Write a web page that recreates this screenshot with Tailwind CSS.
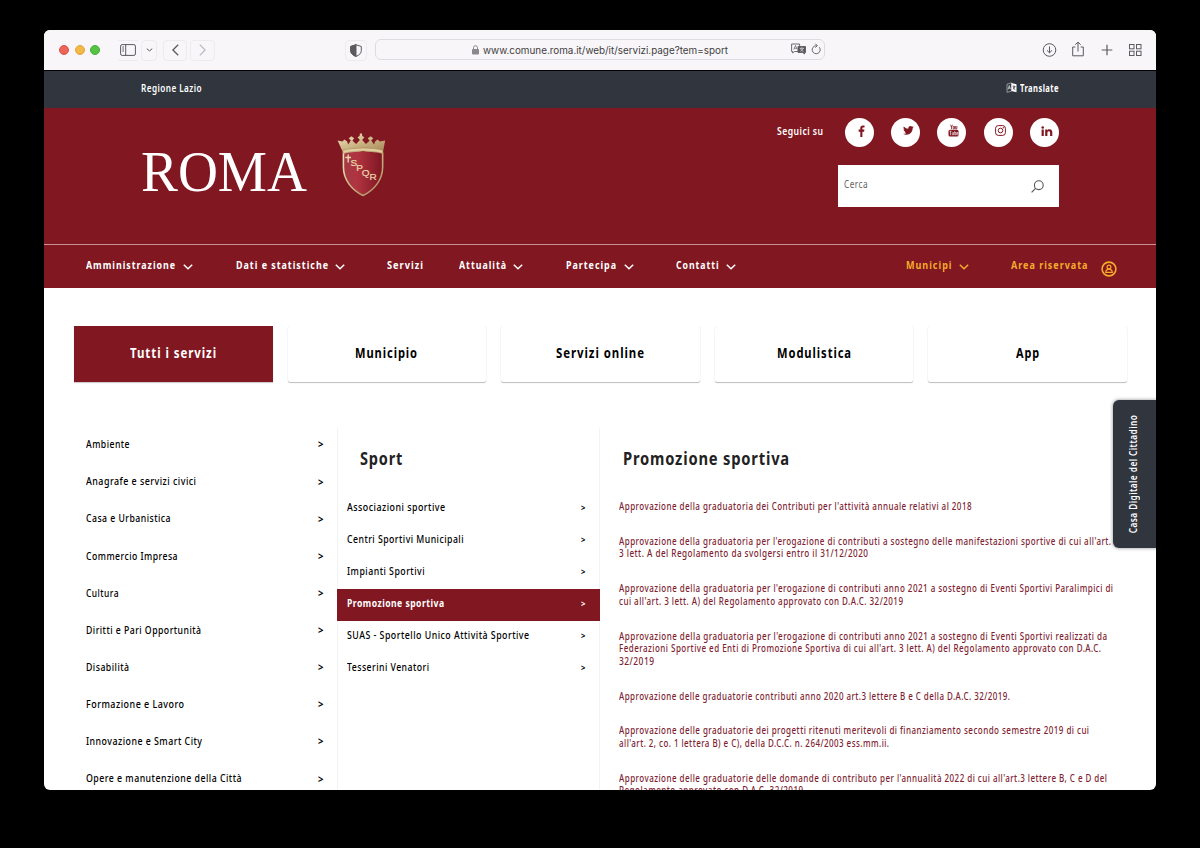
<!DOCTYPE html>
<html lang="it">
<head>
<meta charset="utf-8">
<title>Roma Capitale - Servizi</title>
<script src="https://cdn.jsdelivr.net/npm/@tailwindcss/browser@4"></script>
</head>
<body class="bg-black w-[1200px] h-[848px] overflow-hidden pt-[30px] pl-[44px] font-['Noto_Sans','Open_Sans',sans-serif] text-[11px] text-black tracking-[.6px]">
<div class="relative w-[1112px] h-[760px] rounded-[6px] bg-white overflow-hidden flex flex-col">

  <!-- browser toolbar -->
  <div class="h-[41px] shrink-0 bg-[#f8f6f9] border-b border-black flex items-center pl-[15px] pr-[14px] text-[#5c5a5e]">
    <div class="flex gap-[5.5px] w-[59px]">
      <span class="size-[10px] rounded-full bg-[#ec6559] border border-[#d9564b]"></span>
      <span class="size-[10px] rounded-full bg-[#f3b846] border border-[#e0a53c]"></span>
      <span class="size-[10px] rounded-full bg-[#55c443] border border-[#46ae38]"></span>
    </div>
    <div class="w-[20px] h-[21px] border-y border-[#edebee] flex items-center justify-center"><svg class="w-[16px] h-[12px]" viewBox="0 0 16 12" fill="none" stroke="currentColor"><rect x=".6" y=".6" width="14.8" height="10.8" rx="1.5"/><path d="M5.7.6v10.8M2.3 3h1.7M2.3 5h1.7M2.3 7h1.7"/></svg></div>
    <div class="ml-[3px] w-[16px] h-[21px] rounded border border-[#edebee] flex items-center justify-center"><svg class="w-[7px] h-[4px]" viewBox="0 0 7 4" fill="none" stroke="currentColor"><path d="M.8.7 3.5 2.9 6.2.7"/></svg></div>
    <div class="ml-[6px] w-[24px] h-[21px] rounded border border-[#edebee] flex items-center justify-center"><svg class="w-[7px] h-[12px]" viewBox="0 0 7 12" fill="none" stroke="currentColor" stroke-width="1.3"><path d="M6.2.7.9 6l5.3 5.3"/></svg></div>
    <div class="ml-[3px] w-[25px] h-[21px] rounded border border-[#edebee] flex items-center justify-center text-[#b9b7bb]"><svg class="w-[7px] h-[12px]" viewBox="0 0 7 12" fill="none" stroke="currentColor" stroke-width="1.2"><path d="M.8.7 6.1 6 .8 11.3"/></svg></div>
    <div class="ml-[130px] w-[22px] h-[21px] rounded border border-[#edebee] flex items-center justify-center"><svg class="w-[12px] h-[13px]" viewBox="0 0 12 13" fill="none" stroke="currentColor"><path d="M6 .7 11.3 2.5v4C11.300 9.500 9 11.300 6 12.400 3 11.300.7 9.500.7 6.500v-4Z"/><path d="M6 .7v11.700C3 11.300.7 9.500.7 6.500v-4Z" fill="currentColor"/></svg></div>
    <div class="ml-[8px] w-[450px] h-[21px] rounded-[6px] border border-[#dedce0] flex items-center pl-[96px] pr-[3px] relative -top-px">
      <svg class="w-[7px] h-[10px] text-[#8a888c] mt-px" viewBox="0 0 7 10"><rect y="4" width="7" height="5.500" rx="1" fill="currentColor"/><path d="M1.500 4.500V2.700a2 2 0 0 1 4 0v1.800" fill="none" stroke="currentColor"/></svg>
      <span class="ml-[4px] mt-[2px] tracking-normal font-['Inter','Liberation_Sans',sans-serif] text-[10px] text-[#3f3e41]" data-w="245">www.comune.roma.it/web/it/servizi.page?tem=sport</span>
      <svg class="ml-auto w-[15px] h-[12px]" viewBox="0 0 15 12" fill="none" stroke="currentColor" stroke-width=".9"><path d="M7 8.500H3.500L1.700 10V8.500H.6V1h8v2"/><path d="M2.800 6.500 4.500 2.500l1.700 4M3.400 5.300h2.200" stroke-width=".7"/><path d="M7 3.500h7.500v6h-1V11l-1.700-1.500H7Z" fill="currentColor"/><path d="M8.800 5.300h4M10.800 4.500v.8M9.300 8.300c1.500-.6 2.500-1.600 2.800-3M9.600 5.500c.4 1.300 1.400 2.300 2.800 2.800" stroke="#f8f6f9" stroke-width=".6"/></svg>
      <svg class="ml-[5px] w-[10px] h-[12px]" viewBox="0 0 10 12" fill="none" stroke="currentColor" stroke-width=".9"><path d="M8.300 4.200A4 4 0 1 1 5 2.700h.8M4.300.7l2 2-2 2"/></svg>
    </div>
    <div class="ml-auto flex items-center gap-[14.500px]">
      <svg class="w-[15px] h-[14px]" viewBox="0 0 15 14" fill="none" stroke="currentColor"><circle cx="7.500" cy="7" r="6.300"/><path d="M7.500 3.500v6.200M5 7.400l2.500 2.400L10 7.400"/></svg>
      <svg class="w-[14px] h-[16px] -mt-[2px]" viewBox="0 0 14 16" fill="none" stroke="currentColor"><path d="M4.300 6H1.700v8.800h10.600V6H9.700M7 10.500V1.200M4.300 3.700 7 1.100l2.700 2.600"/></svg>
      <svg class="w-[14px] h-[14px]" viewBox="0 0 14 14" fill="none" stroke="currentColor" stroke-width="1.200"><path d="M7 1.700v10.600M1.700 7h10.600"/></svg>
      <svg class="w-[14px] h-[14px]" viewBox="0 0 14 14" fill="none" stroke="currentColor"><rect x="1.500" y="1.500" width="4.500" height="4.300"/><rect x="8.500" y="1.500" width="4.500" height="4.300"/><rect x="1.500" y="8.200" width="4.500" height="4.300"/><rect x="8.500" y="8.200" width="4.500" height="4.300"/></svg>
    </div>
  </div>

  <!-- top bar -->
  <div class="h-[37px] shrink-0 bg-[#31363e] flex justify-between items-start pl-[97px] pr-[97px] text-white font-semibold text-[10.500px]">
    <span class="leading-[16px] mt-[9px]" data-w="61">Regione Lazio</span>
    <div class="flex items-center mt-[9px] leading-[16px]">
      <svg class="w-[11px] h-[11px] mr-[3px] -mt-px" viewBox="0 0 11 11"><path d="M1 2.200 5.500.8v8.400L1 10.300Z" fill="none" stroke="#b9bcc0" stroke-width=".7"/><path d="M2 7.500 3.300 3.500l1.200 3.700M2.400 6.300l1.700-.4" fill="none" stroke="#fff" stroke-width=".6"/><path d="M5.500 1l5 1.300v8L5.500 9Z" fill="#fff"/><path d="M6.500 4.200l3 .5M8 3.500v1M9 4.700C8.700 6 7.900 6.900 6.800 7.300M7.200 5c.3 1.200 1 2.100 2.200 2.900" fill="none" stroke="#31363e" stroke-width=".7"/></svg>
      <span data-w="39" class="font-bold">Translate</span>
    </div>
  </div>

  <!-- header -->
  <div class="h-[137px] shrink-0 bg-[#801721] border-b border-[#c79193] flex text-white">
    <div class="ml-[97px] mt-[26px] h-[76px] flex items-start">
      <span class="font-['Liberation_Serif',serif] tracking-normal text-[57px] leading-[76px] block" data-w="166">ROMA</span>
      <svg class="ml-[29px] -mt-[1px] w-[53px] h-[64px]" viewBox="0 0 50 64" preserveAspectRatio="none">
        <defs>
          <linearGradient id="g" x1="0" x2="1" y1="0" y2="1"><stop offset="0" stop-color="#f3e6c0"/><stop offset=".5" stop-color="#cdb585"/><stop offset="1" stop-color="#a8895a"/></linearGradient>
          <linearGradient id="s" x1="0" x2="1"><stop offset="0" stop-color="#a23a45"/><stop offset=".35" stop-color="#b03440"/><stop offset="1" stop-color="#7e1522"/></linearGradient>
        </defs>
        <path d="M7 20C14 17.500 20 19 25.500 17 31 19 37 17.500 44 20V34C44 47 36 57 25.500 62.500 15 57 7 47 7 34Z" fill="url(#s)" stroke="url(#g)" stroke-width="1.500"/>
        <path d="M6 18 1.500 7.500l4.500 1 2-2 2.500 2 1 3 2.500-4-2-2.200 2.500-2 2.700 2-1.700 2.500 3.500 3.200 3.500-4-2.200-2.800 2-1.200.2-2.400h2l.3 2.400 2 1.200L24.700 7l3.500 4 3.500-3.200L30 5.300l2.700-2 2.500 2-2 2.200 2.700 4 1-3 2.300-2 2.200 2 5-1L44.500 18C37 15.500 14 15.500 6 18Z" fill="url(#g)"/>
        <path d="M6 17.500C16 14.300 35 14.300 44.500 17.500l-.6 2.800C34 17.300 17 17.300 6.700 20.300Z" fill="#e2d0a0" stroke="#8d6b3f" stroke-width=".4"/>
        <path d="M11.500 21.500v8M8.800 24.500h5.400" stroke="#ead8ae" stroke-width="1.300"/>
        <g fill="#ead8ae" stroke="#ead8ae" stroke-width=".2" font-family="Liberation Sans" font-size="9.500" letter-spacing="0" text-anchor="middle"><text x="16.800" y="33.500">S</text><text x="22.300" y="38">P</text><text x="28" y="43">Q</text><text x="35" y="47.500">R</text></g>
      </svg>
    </div>
    <div class="ml-auto mr-[97px] flex flex-col items-end">
      <div class="mt-[10px] flex items-center text-[#801721]">
        <span class="text-white font-semibold text-[11px] -mt-[3px]" data-w="46.500">Seguici su</span>
        <div class="flex gap-[17.300px] ml-[21.500px]">
          <span class="size-[29px] rounded-full bg-white flex items-center justify-center"><svg class="w-[8px] h-[12px] ml-[5px] -mt-[4px]" viewBox="0 0 8 12" fill="currentColor"><path d="M2.300 12V6.700H.6V4.500h1.700V3C2.300 1.200 3.300.4 4.900.4c.8 0 1.400.1 1.600.1v2H5.400c-.9 0-1 .4-1 1v1h2l-.3 2.200H4.400V12Z"/></svg></span>
          <span class="size-[29px] rounded-full bg-white flex items-center justify-center"><svg class="w-[11px] h-[9px] ml-[5px] -mt-[4px]" viewBox="0 0 24 20" fill="currentColor"><path d="M23.600 2.500a9 9 0 0 1-2.700.8 4.800 4.800 0 0 0 2.100-2.700 9 9 0 0 1-3 1.200 4.850 4.850 0 0 0-8.300 4.400A13.700 13.700 0 0 1 1.700 1.100a4.850 4.850 0 0 0 1.500 6.500 5 5 0 0 1-2.200-.6c0 2.300 1.600 4.300 3.900 4.800a5 5 0 0 1-2.200.1 4.850 4.850 0 0 0 4.500 3.400A9.700 9.700 0 0 1 0 17.300a13.700 13.700 0 0 0 7.400 2.200c9 0 14-7.600 13.700-14.400a10 10 0 0 0 2.500-2.600Z"/></svg></span>
          <span class="size-[29px] rounded-full bg-white flex items-center justify-center"><svg class="w-[11px] h-[13px] ml-[4px] -mt-[4px]" viewBox="0 0 11 13"><path d="M2.500.7 3.500 3v2M4.500.7 3.500 3M5.200 2.500h1.300v2.200H5.200ZM7.600 2v2.700h1.300V2" fill="none" stroke="currentColor" stroke-width=".8"/><rect x=".5" y="5.700" width="10" height="6.800" rx="1.500" fill="currentColor"/><path d="M1.500 7.200h2M2.500 7.200v4M4.300 8.200v2.600h1.200V8.200M6.700 7v3.800h1.100V8.500H6.700M9.800 9.700H8.800V8.500h1v1.200M8.800 9.700v1.100h1" fill="none" stroke="#fff" stroke-width=".6"/></svg></span>
          <span class="size-[29px] rounded-full bg-white flex items-center justify-center"><svg class="w-[11px] h-[11px] ml-[4px] -mt-[4px]" viewBox="0 0 11 11" fill="none" stroke="currentColor"><rect x=".6" y=".6" width="9.800" height="9.800" rx="2.700"/><circle cx="5.500" cy="5.500" r="2.300"/><circle cx="8.300" cy="2.800" r=".3"/></svg></span>
          <span class="size-[29px] rounded-full bg-white flex items-center justify-center"><svg class="w-[12px] h-[10px] ml-[5px] -mt-[4px]" viewBox="0 0 12 10" fill="currentColor"><circle cx="1.700" cy="1.500" r="1.300"/><path d="M.6 3.500h2.200V10H.6ZM4.200 3.500h2.100v.9c.4-.7 1.100-1.100 2.200-1.100 2.200 0 2.800 1.300 2.800 3.300V10H9.100V7c0-1-.1-1.800-1.200-1.800S6.400 6 6.400 7v3H4.200Z"/></svg></span>
        </div>
      </div>
      <div class="mt-[18px] w-[221px] h-[42px] bg-white flex items-center pl-[6px] pr-[15px]">
        <span class="text-[#636363] -mt-[4px]" data-w="24">Cerca</span>
        <svg class="ml-auto w-[13px] h-[13px]" viewBox="0 0 13 13" fill="none" stroke="#555" stroke-width="1.100"><circle cx="7.800" cy="5.200" r="4.400"/><path d="M4.600 8.400.6 12.300"/></svg>
      </div>
    </div>
  </div>

  <!-- navigation -->
  <nav class="h-[43px] shrink-0 bg-[#801721] flex items-start pt-[11px] pl-[42px] leading-[18px] font-bold text-white text-[11px] tracking-[1.200px]">
    <span data-w="90">Amministrazione</span>
    <svg class="ml-[7px] mt-[8px] w-[10px] h-[6px]" viewBox="0 0 10 6" fill="none" stroke="currentColor" stroke-width="1.500"><path d="M.8.800 5 4.800 9.200.800"/></svg>
    <span class="ml-[42.500px]" data-w="93">Dati e statistiche</span>
    <svg class="ml-[6px] mt-[8px] w-[10px] h-[6px]" viewBox="0 0 10 6" fill="none" stroke="currentColor" stroke-width="1.500"><path d="M.8.800 5 4.800 9.200.800"/></svg>
    <span class="ml-[42.500px]" data-w="37">Servizi</span>
    <span class="ml-[34.500px]" data-w="48">Attualità</span>
    <svg class="ml-[6.500px] mt-[8px] w-[10px] h-[6px]" viewBox="0 0 10 6" fill="none" stroke="currentColor" stroke-width="1.500"><path d="M.8.800 5 4.800 9.200.800"/></svg>
    <span class="ml-[42.500px]" data-w="51">Partecipa</span>
    <svg class="ml-[7px] mt-[8px] w-[10px] h-[6px]" viewBox="0 0 10 6" fill="none" stroke="currentColor" stroke-width="1.500"><path d="M.8.800 5 4.800 9.200.800"/></svg>
    <span class="ml-[42.500px]" data-w="43.500">Contatti</span>
    <svg class="ml-[6.500px] mt-[8px] w-[10px] h-[6px]" viewBox="0 0 10 6" fill="none" stroke="currentColor" stroke-width="1.500"><path d="M.8.800 5 4.800 9.200.800"/></svg>
    <div class="ml-auto mr-[39px] flex items-start text-[#f5ab2b]">
      <span data-w="46.500">Municipi</span>
      <svg class="ml-[6.500px] mt-[8px] w-[10px] h-[6px]" viewBox="0 0 10 6" fill="none" stroke="currentColor" stroke-width="1.500"><path d="M.8.800 5 4.800 9.200.800"/></svg>
      <span class="ml-[42px]" data-w="77.500">Area riservata</span>
      <svg class="ml-[12px] mt-[5px] size-[16px]" viewBox="0 0 16 16" fill="none" stroke="currentColor" stroke-width="1.600"><circle cx="8" cy="8" r="6.900"/><circle cx="8" cy="6" r="1.900" stroke-width="1.200"/><path d="M4.700 11.300c.2-2 1.300-3.200 3.300-3.200s3.100 1.200 3.300 3.200Z" stroke-width="1.200"/></svg>
    </div>
  </nav>

  <!-- service tabs -->
  <div class="mt-[38px] mx-[30px] h-[56px] shrink-0 grid grid-cols-5 gap-[15px] w-[1053px] text-[14.500px] font-bold tracking-[1.200px]">
    <div class="bg-[#801721] text-white flex items-center justify-center pb-[2px] shadow-[0_1px_1px_#ccc]"><span data-w="87">Tutti i servizi</span></div>
    <div class="rounded-[2px] flex items-center justify-center pb-[2px] shadow-[0_1px_1px_rgba(0,0,0,.25),0_0_1px_rgba(0,0,0,.12)] [clip-path:inset(0_-3px_-3px_-3px)]"><span data-w="63">Municipio</span></div>
    <div class="rounded-[2px] flex items-center justify-center pb-[2px] shadow-[0_1px_1px_rgba(0,0,0,.25),0_0_1px_rgba(0,0,0,.12)] [clip-path:inset(0_-3px_-3px_-3px)]"><span data-w="89">Servizi online</span></div>
    <div class="rounded-[2px] flex items-center justify-center pb-[2px] shadow-[0_1px_1px_rgba(0,0,0,.25),0_0_1px_rgba(0,0,0,.12)] [clip-path:inset(0_-3px_-3px_-3px)]"><span data-w="75">Modulistica</span></div>
    <div class="rounded-[2px] flex items-center justify-center pb-[2px] shadow-[0_1px_1px_rgba(0,0,0,.25),0_0_1px_rgba(0,0,0,.12)] [clip-path:inset(0_-3px_-3px_-3px)]"><span data-w="24">App</span></div>
  </div>

  <!-- columns -->
  <div class="mt-[46px] flex h-[370px]">
    <div class="w-[293px] shrink-0 -mt-[2.200px] pl-[42px] pr-[13px] font-medium">
      <div class="h-[37.130px] flex items-center justify-between"><span data-w="44">Ambiente</span><span class="font-bold text-[10px] mt-px" data-w="6">&gt;</span></div>
      <div class="h-[37.130px] flex items-center justify-between"><span data-w="110.500">Anagrafe e servizi civici</span><span class="font-bold text-[10px] mt-px" data-w="6">&gt;</span></div>
      <div class="h-[37.130px] flex items-center justify-between"><span data-w="85">Casa e Urbanistica</span><span class="font-bold text-[10px] mt-px" data-w="6">&gt;</span></div>
      <div class="h-[37.130px] flex items-center justify-between"><span data-w="92">Commercio Impresa</span><span class="font-bold text-[10px] mt-px" data-w="6">&gt;</span></div>
      <div class="h-[37.130px] flex items-center justify-between"><span data-w="33">Cultura</span><span class="font-bold text-[10px] mt-px" data-w="6">&gt;</span></div>
      <div class="h-[37.130px] flex items-center justify-between"><span data-w="115.500">Diritti e Pari Opportunità</span><span class="font-bold text-[10px] mt-px" data-w="6">&gt;</span></div>
      <div class="h-[37.130px] flex items-center justify-between"><span data-w="43.500">Disabilità</span><span class="font-bold text-[10px] mt-px" data-w="6">&gt;</span></div>
      <div class="h-[37.130px] flex items-center justify-between"><span data-w="98.500">Formazione e Lavoro</span><span class="font-bold text-[10px] mt-px" data-w="6">&gt;</span></div>
      <div class="h-[37.130px] flex items-center justify-between"><span data-w="116.500">Innovazione e Smart City</span><span class="font-bold text-[10px] mt-px" data-w="6">&gt;</span></div>
      <div class="h-[37.130px] flex items-center justify-between"><span data-w="156">Opere e manutenzione della Città</span><span class="font-bold text-[10px] mt-px" data-w="6">&gt;</span></div>
    </div>
    <div class="w-[263px] shrink-0 border-x border-[#f3f3f3] font-medium">
      <h2 class="h-[60px] leading-[59px] mb-[5px] pl-[22px] text-[18.500px] tracking-[1px] font-bold text-[#222] flex"><span data-w="43">Sport</span></h2>
      <div class="h-[32px] pl-[9px] pr-[13px] pb-[3px] flex items-center justify-between"><span data-w="98.500">Associazioni sportive</span><span class="font-bold text-[8px]" data-w="5">&gt;</span></div>
      <div class="h-[32px] pl-[9px] pr-[13px] pb-[3px] flex items-center justify-between"><span data-w="117">Centri Sportivi Municipali</span><span class="font-bold text-[8px]" data-w="5">&gt;</span></div>
      <div class="h-[32px] pl-[9px] pr-[13px] pb-[3px] flex items-center justify-between"><span data-w="78">Impianti Sportivi</span><span class="font-bold text-[8px]" data-w="5">&gt;</span></div>
      <div class="h-[32px] -mx-px pl-[10px] pr-[14px] pb-[3px] flex items-center justify-between bg-[#801721] text-white font-bold"><span data-w="97.500">Promozione sportiva</span><span class="text-[8px]" data-w="5">&gt;</span></div>
      <div class="h-[32px] pl-[9px] pr-[13px] pb-[3px] flex items-center justify-between"><span data-w="182.500">SUAS - Sportello Unico Attività Sportive</span><span class="font-bold text-[8px]" data-w="5">&gt;</span></div>
      <div class="h-[32px] pl-[9px] pr-[13px] pb-[3px] flex items-center justify-between"><span data-w="82.500">Tesserini Venatori</span><span class="font-bold text-[8px]" data-w="5">&gt;</span></div>
    </div>
    <div class="grow pl-[19px]">
      <h2 class="h-[60px] leading-[59px] pl-[4px] text-[18.500px] tracking-[1px] font-bold text-[#222] flex"><span data-w="167">Promozione sportiva</span></h2>
      <ul class="mt-[12px] flex flex-col gap-[22.200px] text-[10.500px] leading-[12.600px] text-[#801f33] font-medium">
        <li class="flex flex-col items-start"><span data-w="353">Approvazione della graduatoria dei Contributi per l'attività annuale relativi al 2018</span></li>
        <li class="flex flex-col items-start"><span data-w="492.500">Approvazione della graduatoria per l'erogazione di contributi a sostegno delle manifestazioni sportive di cui all'art.</span><span data-w="249.500">3 lett. A del Regolamento da svolgersi entro il 31/12/2020</span></li>
        <li class="flex flex-col items-start"><span data-w="494.500">Approvazione della graduatoria per l'erogazione di contributi anno 2021 a sostegno di Eventi Sportivi Paralimpici di</span><span data-w="284.500">cui all'art. 3 lett. A) del Regolamento approvato con D.A.C. 32/2019</span></li>
        <li class="flex flex-col items-start"><span data-w="488.500">Approvazione della graduatoria per l'erogazione di contributi anno 2021 a sostegno di Eventi Sportivi realizzati da</span><span data-w="482.500">Federazioni Sportive ed Enti di Promozione Sportiva di cui all'art. 3 lett. A) del Regolamento approvato con D.A.C.</span><span data-w="35.500">32/2019</span></li>
        <li class="flex flex-col items-start"><span data-w="391.500">Approvazione delle graduatorie contributi anno 2020 art.3 lettere B e C della D.A.C. 32/2019.</span></li>
        <li class="flex flex-col items-start"><span data-w="470.500">Approvazione delle graduatorie dei progetti ritenuti meritevoli di finanziamento secondo semestre 2019 di cui</span><span data-w="270.500">all'art. 2, co. 1 lettera B) e C), della D.C.C. n. 264/2003 ess.mm.ii.</span></li>
        <li class="flex flex-col items-start"><span data-w="488.500">Approvazione delle graduatorie delle domande di contributo per l'annualità 2022 di cui all'art.3 lettere B, C e D del</span><span data-w="184.500">Regolamento approvato con D.A.C. 32/2019</span></li>
      </ul>
    </div>
  </div>

  <!-- side tab floating over the page edge -->
  <div class="absolute right-0 top-[370px] w-[43px] h-[148px] rounded-l-[6px] bg-[#31363e] shadow-[0_0_3px_1px_rgba(49,54,62,.35)] flex items-center justify-center pr-[3px]">
    <div class="-rotate-90 w-[118px] shrink-0 text-white font-semibold text-[11px] flex"><span data-w="118.500">Casa Digitale del Cittadino</span></div>
  </div>
</div>
<script>
  // Condenses each label horizontally to its data-w width while keeping the flow in step.
  function fitLabels() {
    document.querySelectorAll('[data-w]').forEach(el => {
      el.style.display = 'inline-block';
      el.style.whiteSpace = 'nowrap';
      el.style.flexShrink = '0';
      el.style.transformOrigin = 'left center';
      const natural = parseFloat(getComputedStyle(el).width);
      const wanted = parseFloat(el.dataset.w);
      el.style.transform = 'scaleX(' + wanted / natural + ')';
      el.style.marginRight = (wanted - natural) + 'px';
    });
  }
  fitLabels();
  addEventListener('load', fitLabels);
  document.fonts.ready.then(fitLabels);
  document.querySelectorAll('[data-w]').forEach(el => new ResizeObserver(fitLabels).observe(el));
</script>
</body>
</html>
